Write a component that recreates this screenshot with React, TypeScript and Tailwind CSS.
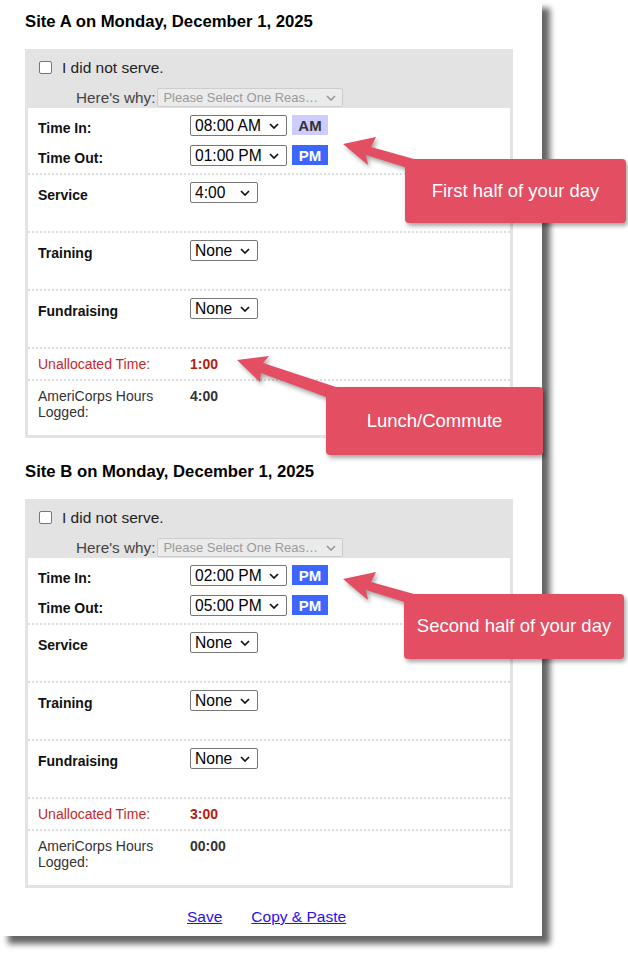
import React from 'react';

type Day = {
  site: string;
  timeIn: string;
  inBadge: 'AM' | 'PM';
  timeOut: string;
  outBadge: 'AM' | 'PM';
  service: string;
  unallocated: string;
  logged: string;
};

const DAYS: Day[] = [
  { site: 'A', timeIn: '08:00 AM', inBadge: 'AM', timeOut: '01:00 PM', outBadge: 'PM', service: '4:00', unallocated: '1:00', logged: '4:00' },
  { site: 'B', timeIn: '02:00 PM', inBadge: 'PM', timeOut: '05:00 PM', outBadge: 'PM', service: 'None', unallocated: '3:00', logged: '00:00' },
];

function Chevron({ color = '#111' }: { color?: string }) {
  return (
    <svg width="10" height="6" viewBox="0 0 10 6" className="shrink-0">
      <path d="M1 1l4 4 4-4" fill="none" stroke={color} strokeWidth="1.7" />
    </svg>
  );
}

function FakeSelect({ value, width }: { value: string; width: string }) {
  return (
    <div className={`flex h-[21px] ${width} items-center justify-between rounded-[2px] border border-[#767676] bg-white pl-[4px] pr-[7px]`}>
      <span className="text-[15.6px] leading-none text-black">{value}</span>
      <Chevron />
    </div>
  );
}

function Badge({ kind }: { kind: 'AM' | 'PM' }) {
  return (
    <span
      className={`ml-[5px] flex h-[20px] w-[36px] items-center justify-center text-[15px] font-bold leading-none ${
        kind === 'AM' ? 'bg-[#ccccff] text-[#333]' : 'bg-[#3d66ff] text-white'
      }`}
    >
      {kind}
    </span>
  );
}

function Label({ children }: { children: React.ReactNode }) {
  return <div className="w-[152px] shrink-0 pt-[5px] text-[14px] font-bold leading-[16px] text-[#111]">{children}</div>;
}

function Sep() {
  return <div className="border-t-2 border-dotted border-[#dcdcdc]" />;
}

function DaySection({ day }: { day: Day }) {
  return (
    <section>
      <h2 className="h-[49px] pt-[12px] text-[16.7px] font-bold leading-[19px] text-black">
        Site {day.site} on Monday, December 1, 2025
      </h2>
      <div className="w-[488px] border-[3px] border-[#e3e3e3] bg-white">
        <div className="h-[56px] bg-[#e3e3e3] pt-[9px]">
          <div className="flex h-[13px] items-center pl-[11px]">
            <span className="h-[13px] w-[13px] rounded-[2px] border border-[#767676] bg-white" />
            <span className="ml-[10px] text-[15.5px] leading-none text-[#222]">I did not serve.</span>
          </div>
          <div className="mt-[14px] flex h-[19px] items-center pl-[48px]">
            <span className="text-[15.3px] leading-none text-[#444]">Here's why:</span>
            <div className="ml-[2px] flex h-[19px] w-[186px] items-center justify-between rounded-[2px] border border-[#cdcdcd] bg-[#ebebeb] pl-[5px] pr-[6px]">
              <span className="text-[13px] leading-none text-[#9a9a9a]">Please Select One Reas…</span>
              <Chevron color="#9a9a9a" />
            </div>
          </div>
        </div>

        <div className="flex h-[65px] flex-col gap-[9px] pl-[10px] pt-[7px]">
          <div className="flex items-start">
            <Label>Time In:</Label>
            <FakeSelect value={day.timeIn} width="w-[97px]" />
            <Badge kind={day.inBadge} />
          </div>
          <div className="flex items-start">
            <Label>Time Out:</Label>
            <FakeSelect value={day.timeOut} width="w-[97px]" />
            <Badge kind={day.outBadge} />
          </div>
        </div>
        <Sep />
        <div className="flex h-[56px] items-start pl-[10px] pt-[7px]">
          <Label>Service</Label>
          <FakeSelect value={day.service} width="w-[68px]" />
        </div>
        <Sep />
        <div className="flex h-[56px] items-start pl-[10px] pt-[7px]">
          <Label>Training</Label>
          <FakeSelect value="None" width="w-[68px]" />
        </div>
        <Sep />
        <div className="flex h-[56px] items-start pl-[10px] pt-[7px]">
          <Label>Fundraising</Label>
          <FakeSelect value="None" width="w-[68px]" />
        </div>
        <Sep />
        <div className="flex h-[30px] items-center pl-[10px] text-[14px] leading-[16px]">
          <span className="w-[152px] shrink-0 text-[#c62828]">Unallocated Time:</span>
          <span className="font-bold text-[#b3200e]">{day.unallocated}</span>
        </div>
        <Sep />
        <div className="flex h-[54px] items-start pl-[10px] pt-[7px] text-[14px] leading-[16px] text-[#333]">
          <span className="w-[152px] shrink-0 pr-[30px]">AmeriCorps Hours Logged:</span>
          <span className="font-bold">{day.logged}</span>
        </div>
      </div>
    </section>
  );
}

function Callout({ text, className }: { text: string; className: string }) {
  return (
    <div
      className={`absolute flex items-center justify-center rounded-[4px] bg-[#e34e62] text-[18.5px] leading-none text-white shadow-[2px_3px_4px_rgba(0,0,0,0.35)] ${className}`}
    >
      {text}
    </div>
  );
}

export default function App() {
  return (
    <div className="relative h-[959px] w-[628px] overflow-hidden bg-white font-['Liberation_Sans',Arial,sans-serif]">
      <div className="h-[936px] w-[542px] bg-white pl-[25px] shadow-[8px_8px_6px_rgba(0,0,0,0.6)]">
        <DaySection day={DAYS[0]} />
        <div className="mt-[12px]">
          <DaySection day={DAYS[1]} />
        </div>
        <div className="mt-[20px] flex gap-[29px] pl-[162px] text-[15.5px] leading-[18px] text-[#2a0ff0]">
          <a className="underline" href="#">Save</a>
          <a className="underline" href="#">Copy &amp; Paste</a>
        </div>
      </div>

      <svg
        className="pointer-events-none absolute left-0 top-0 drop-shadow-[2px_3px_2px_rgba(0,0,0,0.35)]"
        width="628"
        height="959"
        viewBox="0 0 628 959"
      >
        <polygon fill="#e34e62" points="343,144 376,137 371,147 430,163.5 430,175 366,155 368,165" />
        <polygon fill="#e34e62" points="237,360 269,356 263,363 345,390 345,404 261,373 260,382" />
        <polygon fill="#e34e62" points="343,579 376,572 371,582 430,598.5 430,610 366,590 368,600" />
      </svg>

      <Callout text="First half of your day" className="left-[405px] top-[159px] h-[64px] w-[221px]" />
      <Callout text="Lunch/Commute" className="left-[326px] top-[387px] h-[68px] w-[217px]" />
      <Callout text="Second half of your day" className="left-[404px] top-[594px] h-[65px] w-[220px]" />
    </div>
  );
}
